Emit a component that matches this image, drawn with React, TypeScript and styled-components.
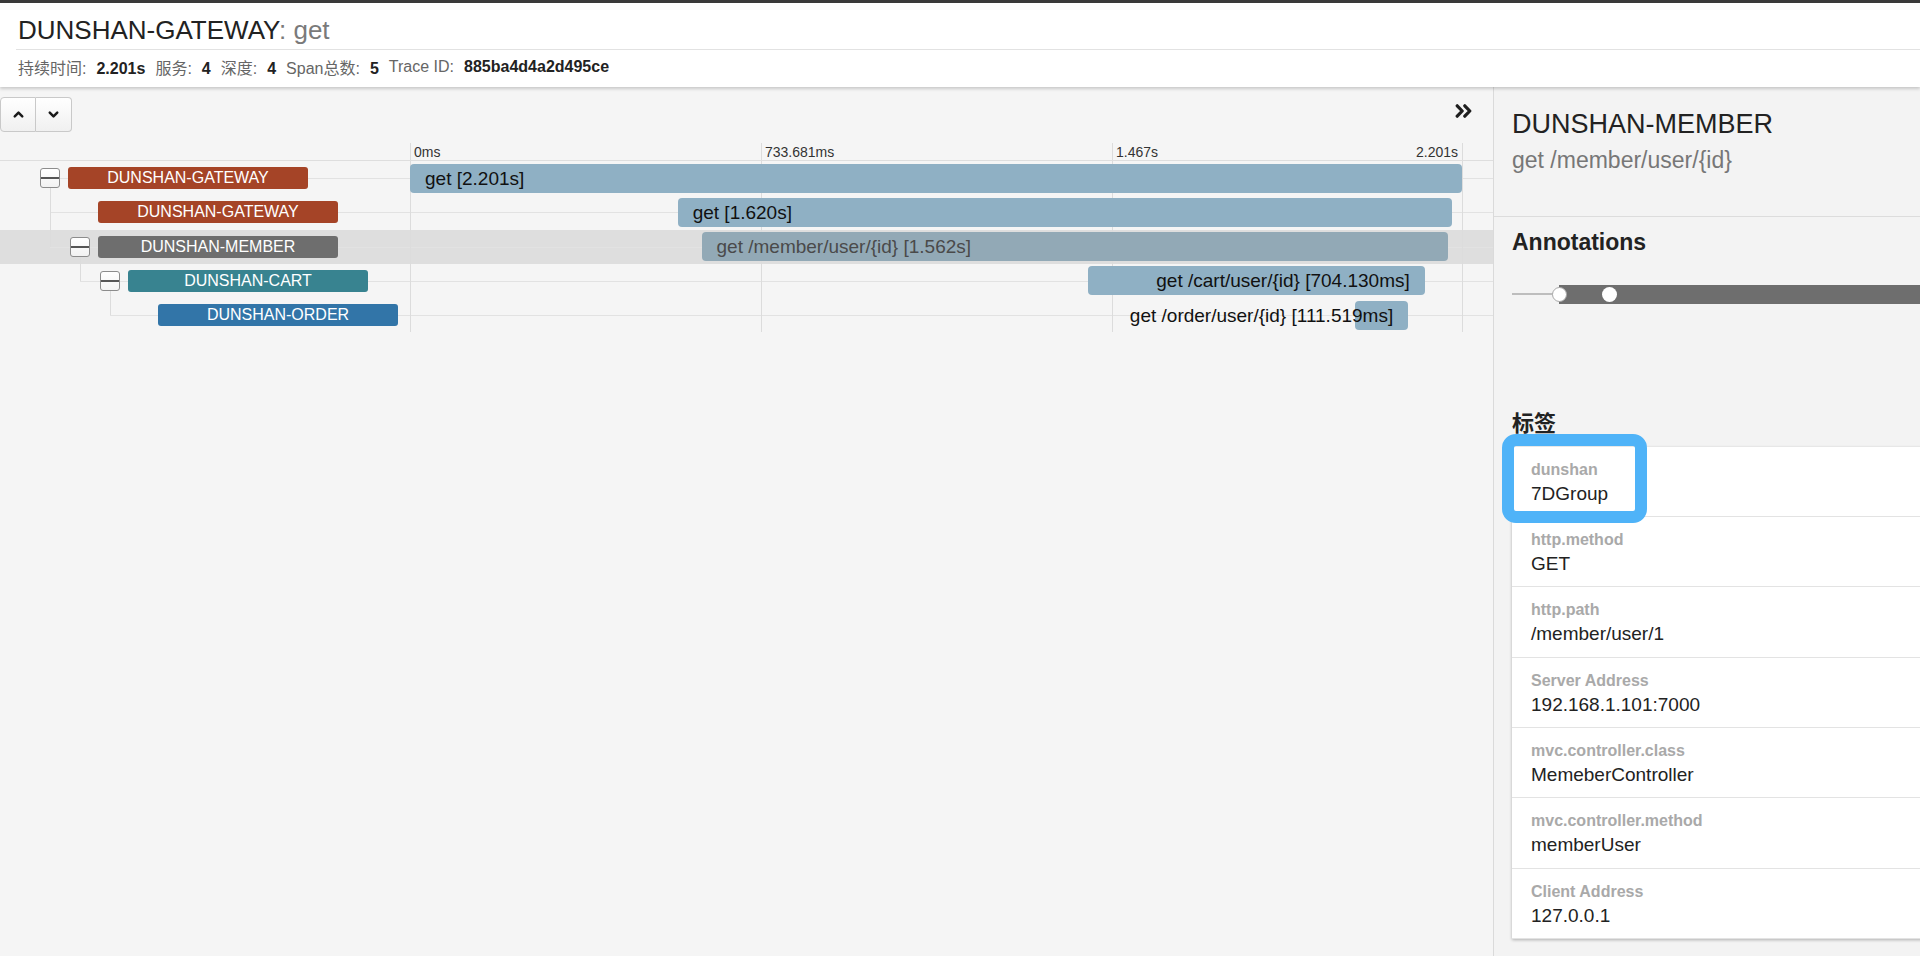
import React from "react";
import styled, { createGlobalStyle, css } from "styled-components";
import { ChevronUp, ChevronDown } from "lucide-react";

const GlobalStyle = createGlobalStyle`
  html, body { margin: 0; padding: 0; height: 100%; }
  body {
    background: #f5f5f5;
    font-family: "Liberation Sans", Arial, "Noto Sans CJK SC", sans-serif;
    color: #222;
    overflow: hidden;
  }
  * { box-sizing: border-box; }
`;

const Page = styled.div`
  height: 956px;
  display: flex;
  flex-direction: column;
`;

const Header = styled.header`
  flex: none;
  border-top: 3px solid #3a3a3a;
  background: #fff;
  padding-left: 16px;
  box-shadow: 0 2px 3px rgba(0, 0, 0, 0.18);
  position: relative;
  z-index: 2;
`;

const Title = styled.h1`
  margin: 0;
  padding: 8px 0 0 2px;
  height: 47px;
  line-height: 39px;
  font-size: 26px;
  font-weight: 400;
  color: #222;
  border-bottom: 1px solid #e2e2e2;
`;

const TitleOp = styled.span`
  color: #7a7a7a;
`;

const Stats = styled.div`
  display: flex;
  align-items: center;
  height: 37px;
  padding: 0 0 3px 2px;
  font-size: 16px;
`;

const Stat = styled.span`
  margin-right: 10px;
  white-space: nowrap;
`;

const StatLabel = styled.span`
  color: #666;
  margin-right: 10px;
`;

const StatValue = styled.b`
  color: #222;
`;

const Body = styled.div`
  flex: 1;
  display: flex;
  min-height: 0;
`;

const Main = styled.main`
  flex: 1;
  min-width: 0;
  background: #f5f5f5;
`;

const Toolbar = styled.div`
  height: 56px;
  display: flex;
  justify-content: space-between;
  align-items: flex-start;
  padding: 10px 20px 0 0;
`;

const BtnGroup = styled.div`
  display: flex;
`;

const Btn = styled.button<{ $pos: "first" | "last" }>`
  width: 36px;
  height: 35px;
  padding: 0;
  display: flex;
  align-items: center;
  justify-content: center;
  border: 1px solid #c9c9c9;
  background: linear-gradient(#ffffff, #f0f0f0);
  color: #1a1a1a;
  ${(p) =>
    p.$pos === "first"
      ? css`
          border-radius: 4px 0 0 4px;
        `
      : css`
          border-radius: 0 4px 4px 0;
          border-left: none;
        `}
`;

const ExpandBtn = styled.span`
  display: flex;
  margin-top: 7px;
  color: #222;
`;

const TREE_W = 410;
const TIME_W = 1053;
const SCALE = 1052 / 2201;

const gridLines = css`
  background-image: linear-gradient(#dcdcdc, #dcdcdc), linear-gradient(#dcdcdc, #dcdcdc),
    linear-gradient(#dcdcdc, #dcdcdc), linear-gradient(#dcdcdc, #dcdcdc);
  background-size: 1px 100%;
  background-repeat: no-repeat;
  background-position: 0 0, 351px 0, 702px 0, 1052px 0;
`;

const Ruler = styled.div`
  display: flex;
  height: 18px;
  border-bottom: 1px solid #dedede;
`;

const TreeSpacer = styled.div`
  width: ${TREE_W}px;
  flex: none;
`;

const RulerTime = styled.div`
  width: ${TIME_W}px;
  flex: none;
  display: grid;
  grid-template-columns: 351px 351px 351px;
  font-size: 14px;
  line-height: 19px;
  color: #333;
  ${gridLines}
`;

const Tick = styled.span`
  padding-left: 4px;
`;

const TickPair = styled.div`
  display: flex;
  justify-content: space-between;
  padding: 0 5px 0 4px;
`;

const Row = styled.div<{ $selected?: boolean; $lineStart: number }>`
  display: flex;
  height: 34.25px;
  position: relative;
  background: ${(p) => (p.$selected ? "rgba(0,0,0,0.095)" : "transparent")};
  &::before {
    content: "";
    position: absolute;
    left: ${(p) => p.$lineStart}px;
    right: 0;
    top: 50%;
    height: 1px;
    background: #e2e2e2;
  }
`;

const TreeCell = styled.div<{ $depth: number }>`
  width: ${TREE_W}px;
  flex: none;
  position: relative;
  display: flex;
  align-items: center;
  gap: 8px;
  padding-left: ${(p) => 40 + p.$depth * 30}px;
`;

const VLine = styled.span<{ $x: number; $part: "upper" | "lower" }>`
  position: absolute;
  left: ${(p) => p.$x}px;
  width: 1px;
  background: #dcdcdc;
  ${(p) =>
    p.$part === "upper"
      ? css`
          top: 0;
          height: 50%;
        `
      : css`
          top: 50%;
          bottom: 0;
        `}
`;

const Toggle = styled.span`
  width: 20px;
  height: 20px;
  flex: none;
  border: 1px solid #8c8c8c;
  border-radius: 3px;
  background: linear-gradient(#ffffff, #f2f2f2);
  position: relative;
  z-index: 1;
  &::after {
    content: "";
    position: absolute;
    left: 0;
    right: 0;
    top: 8px;
    height: 2px;
    background: #555;
  }
`;

const ToggleSlot = styled.span`
  width: 20px;
  flex: none;
`;

const SERVICE_COLORS: Record<string, string> = {
  "DUNSHAN-GATEWAY": "#a54427",
  "DUNSHAN-MEMBER": "#6e6e6e",
  "DUNSHAN-CART": "#388390",
  "DUNSHAN-ORDER": "#3275a8",
};

const ServiceLabel = styled.span<{ $color: string }>`
  width: 240px;
  height: 22px;
  flex: none;
  border-radius: 3px;
  background: ${(p) => p.$color};
  color: #fff;
  font-size: 16px;
  line-height: 22px;
  text-align: center;
  position: relative;
  z-index: 1;
`;

const TimeCell = styled.div`
  width: ${TIME_W}px;
  flex: none;
  position: relative;
  ${gridLines}
`;

const Bar = styled.div<{ $selected?: boolean }>`
  position: absolute;
  top: 50%;
  height: 29px;
  margin-top: -14.5px;
  border-radius: 4px;
  background: ${(p) => (p.$selected ? "#92a9b6" : "#8fb0c4")};
`;

const BarText = styled.span<{ $align: "left" | "right"; $selected?: boolean }>`
  position: absolute;
  top: 0;
  line-height: 29px;
  font-size: 19px;
  white-space: nowrap;
  color: ${(p) => (p.$selected ? "#4a4a4a" : "#111")};
  ${(p) =>
    p.$align === "left"
      ? css`
          left: 15px;
        `
      : css`
          right: 15px;
        `}
`;

const Panel = styled.aside`
  width: 427px;
  flex: none;
  background: #f3f3f3;
  border-left: 1px solid #dadada;
  overflow: hidden;
`;

const PanelHead = styled.div`
  padding: 21px 18px 41px;
  border-bottom: 1px solid #dcdcdc;
`;

const PanelTitle = styled.h2`
  margin: 0;
  font-size: 27px;
  line-height: 32px;
  font-weight: 400;
  color: #222;
`;

const PanelSub = styled.div`
  margin-top: 5px;
  font-size: 23px;
  line-height: 30px;
  color: #777;
`;

const Section = styled.div`
  padding: 11px 0 0 18px;
`;

const SectionTitle = styled.h3<{ $gap?: number }>`
  margin: ${(p) => p.$gap ?? 0}px 0 0;
  font-size: ${(p) => (p.$gap ? 22 : 23)}px;
  line-height: 28px;
  font-weight: 700;
  color: #222;
`;

const AnnoTrack = styled.div`
  display: flex;
  align-items: center;
  height: 19px;
  margin-top: 28.5px;
`;

const AnnoLead = styled.span`
  width: 47px;
  height: 2px;
  background: #bdbdbd;
  flex: none;
`;

const AnnoBar = styled.div`
  flex: 1;
  height: 19px;
  background: #6e6e6e;
  position: relative;
`;

const AnnoDot = styled.span<{ $at: number; $ring?: boolean }>`
  position: absolute;
  top: 50%;
  left: ${(p) => p.$at}px;
  width: 15px;
  height: 15px;
  margin: -7.5px 0 0 -7.5px;
  border-radius: 50%;
  background: #fff;
  border: ${(p) => (p.$ring ? "1.5px solid #a8a8a8" : "none")};
`;

const TagCard = styled.div`
  margin-top: 9px;
  margin-right: -6px;
  background: #fff;
  box-shadow: 0 1px 3px rgba(0, 0, 0, 0.28);
  position: relative;
`;

const TagRow = styled.div`
  height: 70.4px;
  padding: 13px 19px 0;
  border-bottom: 1px solid #e3e3e3;
  &:last-child {
    border-bottom: none;
  }
`;

const TagKey = styled.div`
  font-size: 16px;
  line-height: 20px;
  font-weight: 700;
  color: #a9a9a9;
`;

const TagValue = styled.div`
  margin-top: 2px;
  font-size: 19px;
  line-height: 24px;
  color: #222;
`;

const Callout = styled.span`
  position: absolute;
  left: -10px;
  top: -13px;
  width: 145px;
  height: 89px;
  border: 12px solid #4fb3f8;
  border-radius: 14px;
  pointer-events: none;
`;

type Span = {
  depth: number;
  service: string;
  toggle: boolean;
  start: number;
  dur: number;
  text: string;
  align: "left" | "right";
  selected?: boolean;
  lines: { x: number; part: "upper" | "lower" }[];
};

const spans: Span[] = [
  {
    depth: 0,
    service: "DUNSHAN-GATEWAY",
    toggle: true,
    start: 0,
    dur: 2201,
    text: "get [2.201s]",
    align: "left",
    lines: [{ x: 50, part: "lower" }],
  },
  {
    depth: 1,
    service: "DUNSHAN-GATEWAY",
    toggle: false,
    start: 560,
    dur: 1620,
    text: "get [1.620s]",
    align: "left",
    lines: [
      { x: 50, part: "upper" },
      { x: 50, part: "lower" },
    ],
  },
  {
    depth: 1,
    service: "DUNSHAN-MEMBER",
    toggle: true,
    start: 610,
    dur: 1562,
    text: "get /member/user/{id} [1.562s]",
    align: "left",
    selected: true,
    lines: [
      { x: 50, part: "upper" },
      { x: 80, part: "lower" },
    ],
  },
  {
    depth: 2,
    service: "DUNSHAN-CART",
    toggle: true,
    start: 1419,
    dur: 704.13,
    text: "get /cart/user/{id} [704.130ms]",
    align: "right",
    lines: [
      { x: 80, part: "upper" },
      { x: 110, part: "lower" },
    ],
  },
  {
    depth: 3,
    service: "DUNSHAN-ORDER",
    toggle: false,
    start: 1977,
    dur: 111.519,
    text: "get /order/user/{id} [111.519ms]",
    align: "right",
    lines: [{ x: 110, part: "upper" }],
  },
];

const tags = [
  ["dunshan", "7DGroup"],
  ["http.method", "GET"],
  ["http.path", "/member/user/1"],
  ["Server Address", "192.168.1.101:7000"],
  ["mvc.controller.class", "MemeberController"],
  ["mvc.controller.method", "memberUser"],
  ["Client Address", "127.0.0.1"],
];

const ChevronsRightIcon = () => (
  <svg width="18" height="14" viewBox="0 0 18 14" fill="none">
    <path
      d="M2.2 1.8 L7.2 7 L2.2 12.2 M9.8 1.8 L14.8 7 L9.8 12.2"
      stroke="#1f1f1f"
      strokeWidth="3.2"
      strokeLinecap="round"
      strokeLinejoin="round"
    />
  </svg>
);

export default function App() {
  return (
    <Page>
      <GlobalStyle />
      <Header>
        <Title>
          DUNSHAN-GATEWAY<TitleOp>: get</TitleOp>
        </Title>
        <Stats>
          <Stat>
            <StatLabel>持续时间:</StatLabel>
            <StatValue>2.201s</StatValue>
          </Stat>
          <Stat>
            <StatLabel>服务:</StatLabel>
            <StatValue>4</StatValue>
          </Stat>
          <Stat>
            <StatLabel>深度:</StatLabel>
            <StatValue>4</StatValue>
          </Stat>
          <Stat>
            <StatLabel>Span总数:</StatLabel>
            <StatValue>5</StatValue>
          </Stat>
          <Stat>
            <StatLabel>Trace ID:</StatLabel>
            <StatValue>885ba4d4a2d495ce</StatValue>
          </Stat>
        </Stats>
      </Header>
      <Body>
        <Main>
          <Toolbar>
            <BtnGroup>
              <Btn $pos="first">
                <ChevronUp size={15} strokeWidth={4} />
              </Btn>
              <Btn $pos="last">
                <ChevronDown size={15} strokeWidth={4} />
              </Btn>
            </BtnGroup>
            <ExpandBtn>
              <ChevronsRightIcon />
            </ExpandBtn>
          </Toolbar>
          <Ruler>
            <TreeSpacer />
            <RulerTime>
              <Tick>0ms</Tick>
              <Tick>733.681ms</Tick>
              <TickPair>
                <span>1.467s</span>
                <span>2.201s</span>
              </TickPair>
            </RulerTime>
          </Ruler>
          {spans.map((s, i) => (
            <Row
              key={i}
              $selected={s.selected}
              $lineStart={s.depth === 0 ? 40 : 50 + (s.depth - 1) * 30}
            >
              <TreeCell $depth={s.depth}>
                {s.lines.map((l, j) => (
                  <VLine key={j} $x={l.x} $part={l.part} />
                ))}
                {s.toggle ? <Toggle /> : <ToggleSlot />}
                <ServiceLabel $color={SERVICE_COLORS[s.service]}>{s.service}</ServiceLabel>
              </TreeCell>
              <TimeCell>
                <Bar
                  $selected={s.selected}
                  style={{ left: s.start * SCALE, width: s.dur * SCALE }}
                >
                  <BarText $align={s.align} $selected={s.selected}>
                    {s.text}
                  </BarText>
                </Bar>
              </TimeCell>
            </Row>
          ))}
        </Main>
        <Panel>
          <PanelHead>
            <PanelTitle>DUNSHAN-MEMBER</PanelTitle>
            <PanelSub>get /member/user/{"{id}"}</PanelSub>
          </PanelHead>
          <Section>
            <SectionTitle>Annotations</SectionTitle>
            <AnnoTrack>
              <AnnoLead />
              <AnnoBar>
                <AnnoDot $at={0} $ring />
                <AnnoDot $at={50} />
              </AnnoBar>
            </AnnoTrack>
            <SectionTitle $gap={106}>标签</SectionTitle>
            <TagCard>
              {tags.map(([k, v]) => (
                <TagRow key={k}>
                  <TagKey>{k}</TagKey>
                  <TagValue>{v}</TagValue>
                </TagRow>
              ))}
              <Callout />
            </TagCard>
          </Section>
        </Panel>
      </Body>
    </Page>
  );
}
